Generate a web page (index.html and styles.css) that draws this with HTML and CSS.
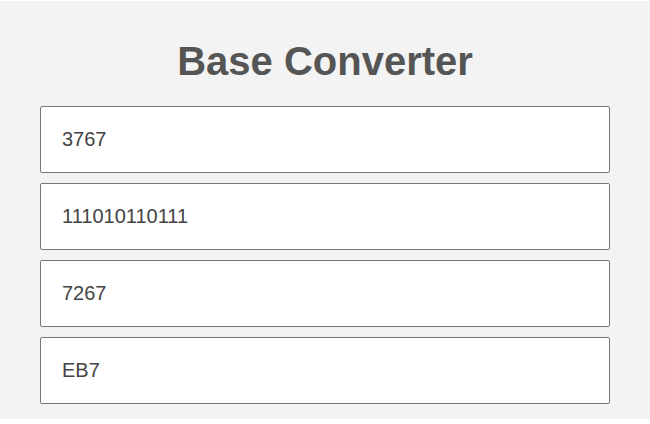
FILE: index.html
```html
<!DOCTYPE html>
<html>
<head>
<meta charset="utf-8">
<link rel="stylesheet" href="styles.css">
</head>
<body>
<main class="converter">
  <h1 class="title">Base Converter</h1>
  <div class="fields">
    <input class="field" type="text" value="3767">
    <input class="field" type="text" value="111010110111">
    <input class="field" type="text" value="7267">
    <input class="field" type="text" value="EB7">
  </div>
</main>
</body>
</html>
```
FILE: styles.css
```css
html, body {
  margin: 0;
  padding: 0;
  background: #ffffff;
}
.converter {
  margin-top: 1px;
  height: 418px;
  box-sizing: border-box;
  background: #f3f3f3;
  padding: 37px 40px 0;
  font-family: "Liberation Sans", Arial, sans-serif;
}
.title {
  margin: 0 0 22px;
  font-size: 40px;
  line-height: 46px;
  font-weight: bold;
  text-align: center;
  color: #555555;
}
.fields {
  display: flex;
  flex-direction: column;
  gap: 10px;
}
.field {
  display: block;
  width: 570px;
  height: 67px;
  box-sizing: border-box;
  margin: 0;
  padding: 0 20px 0 21px;
  border: 1px solid #777777;
  border-radius: 2px;
  background: #ffffff;
  font-family: "Liberation Sans", Arial, sans-serif;
  font-size: 20px;
  color: #444444;
  outline: none;
}
```
